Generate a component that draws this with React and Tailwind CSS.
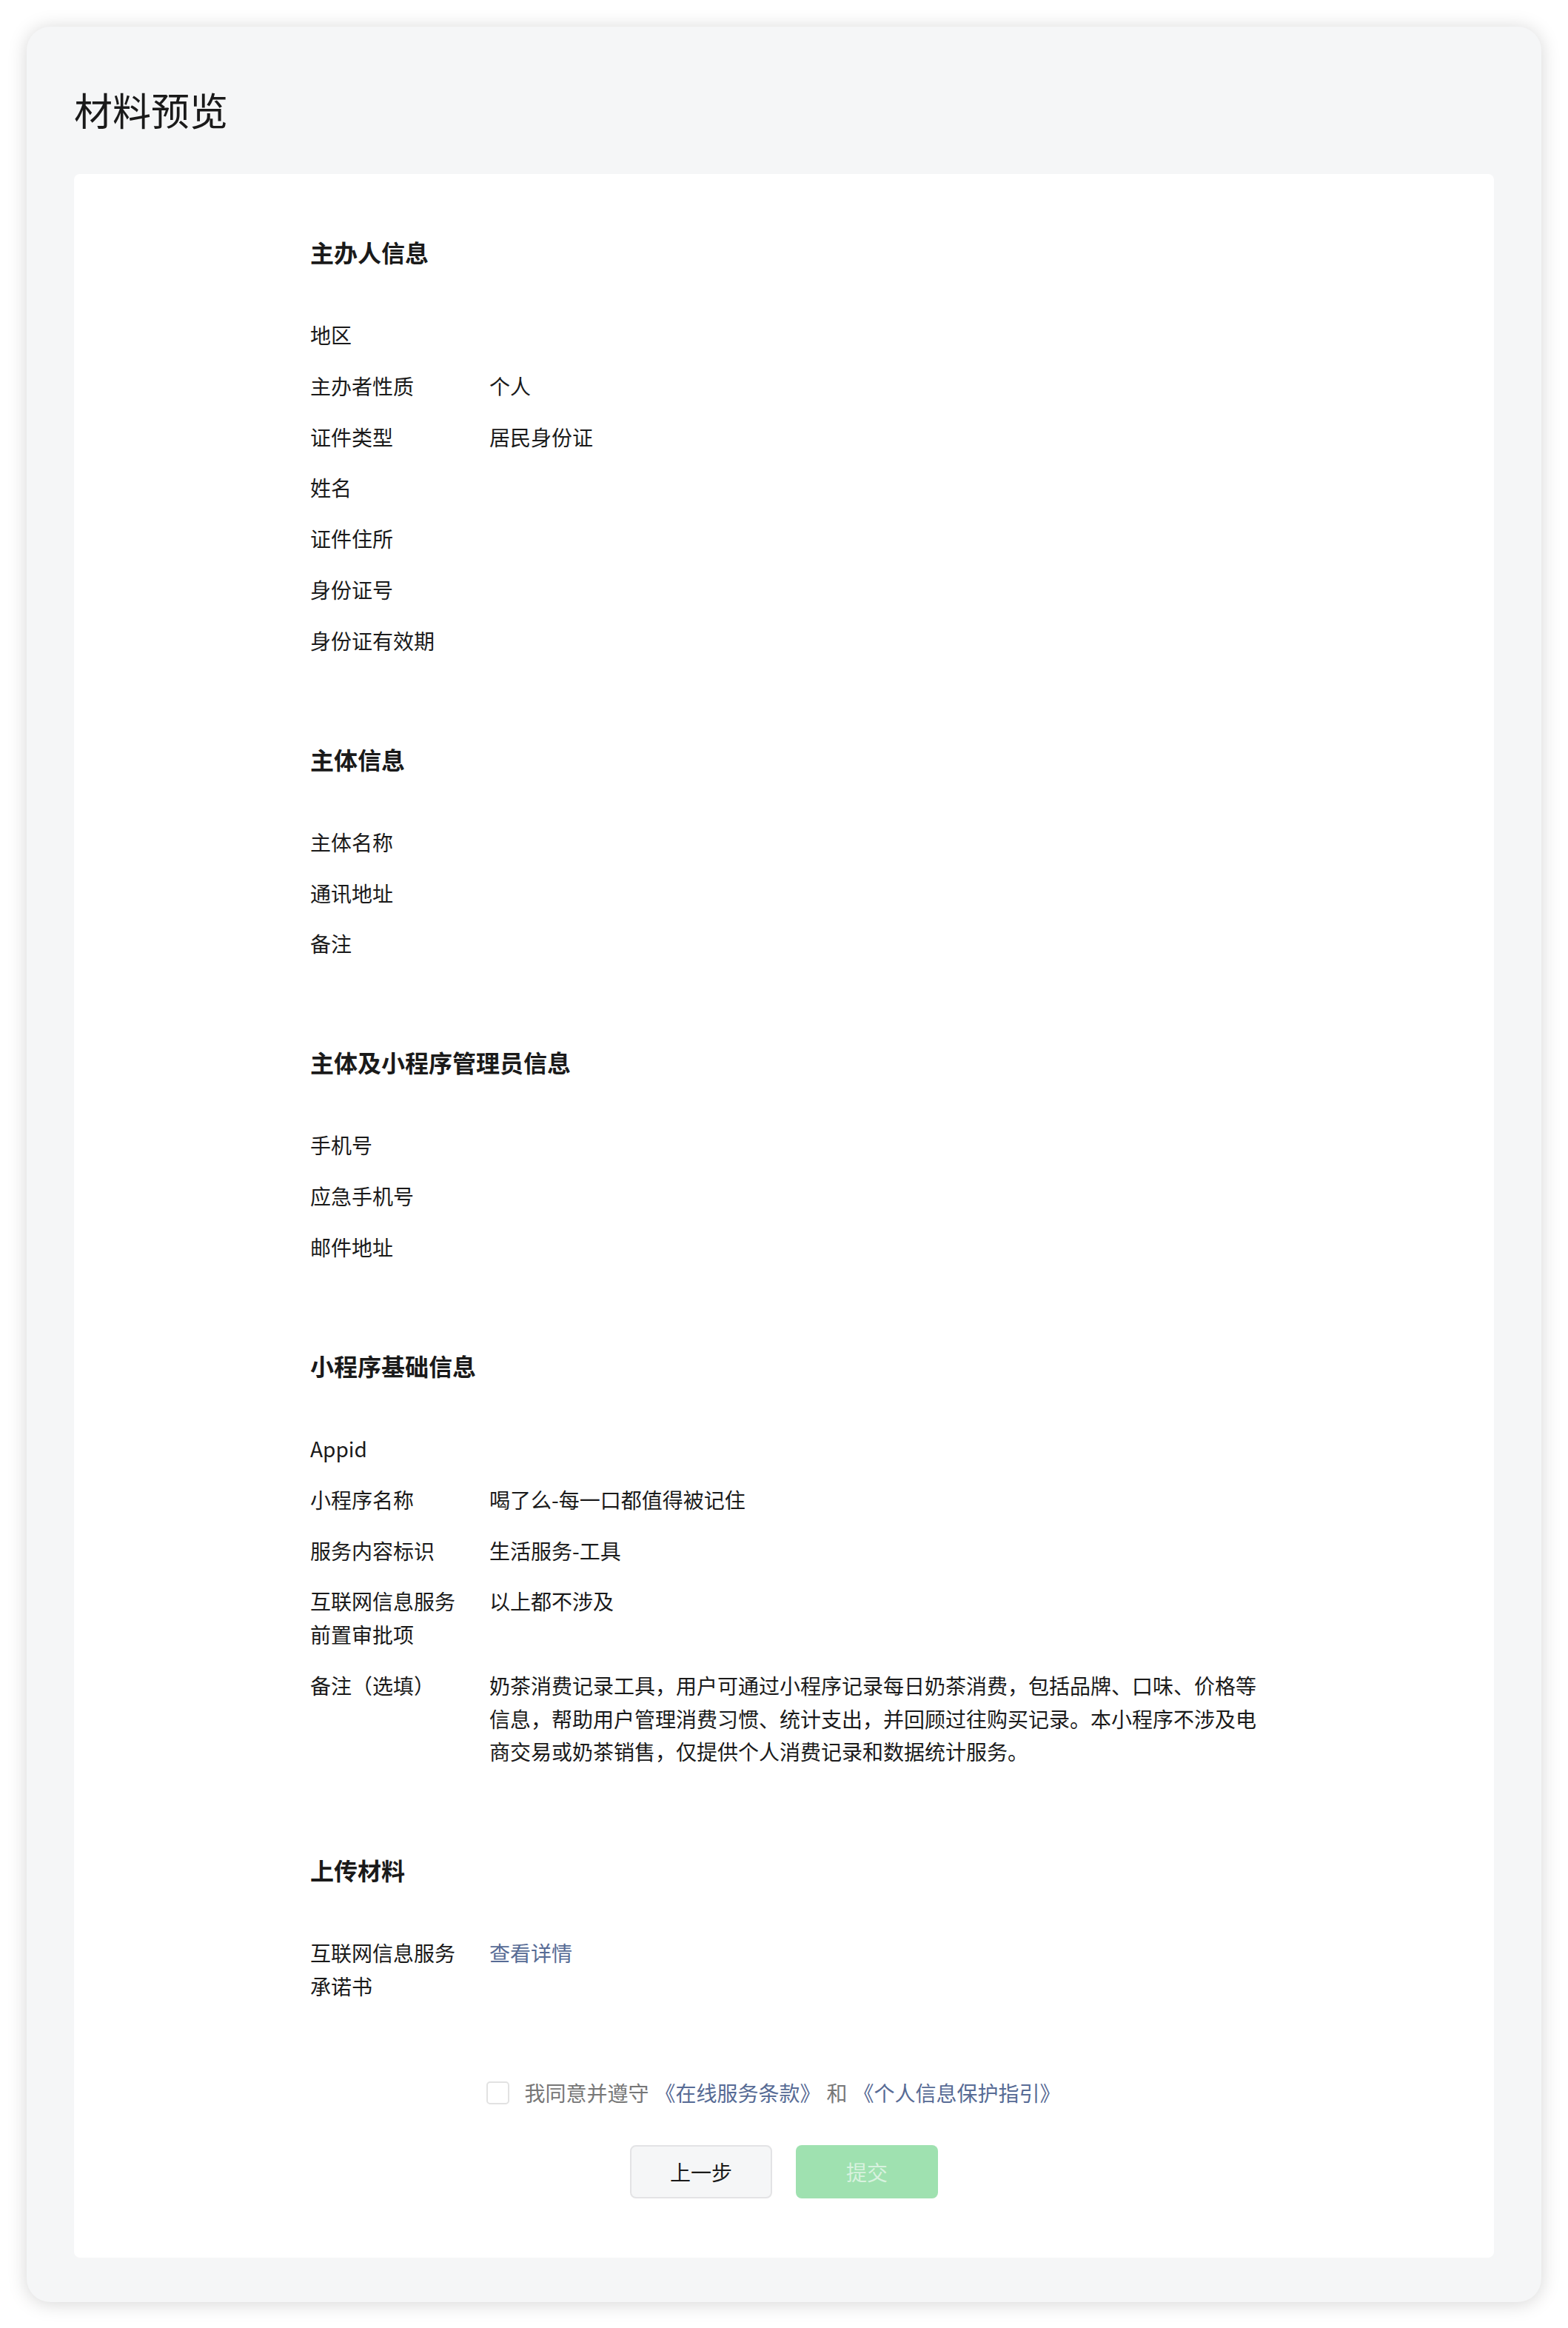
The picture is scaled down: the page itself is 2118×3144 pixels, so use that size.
const FONT = { fontFamily: '"Noto Sans CJK SC", "Noto Sans", sans-serif' };

const sections = [
  {
    title: '主办人信息',
    rows: [
      ['地区', ''],
      ['主办者性质', '个人'],
      ['证件类型', '居民身份证'],
      ['姓名', ''],
      ['证件住所', ''],
      ['身份证号', ''],
      ['身份证有效期', ''],
    ],
  },
  {
    title: '主体信息',
    rows: [
      ['主体名称', ''],
      ['通讯地址', ''],
      ['备注', ''],
    ],
  },
  {
    title: '主体及小程序管理员信息',
    rows: [
      ['手机号', ''],
      ['应急手机号', ''],
      ['邮件地址', ''],
    ],
  },
  {
    title: '小程序基础信息',
    rows: [
      ['Appid', ''],
      ['小程序名称', '喝了么-每一口都值得被记住'],
      ['服务内容标识', '生活服务-工具'],
      ['互联网信息服务前置审批项', '以上都不涉及'],
      [
        '备注（选填）',
        '奶茶消费记录工具，用户可通过小程序记录每日奶茶消费，包括品牌、口味、价格等信息，帮助用户管理消费习惯、统计支出，并回顾过往购买记录。本小程序不涉及电商交易或奶茶销售，仅提供个人消费记录和数据统计服务。',
      ],
    ],
  },
  {
    title: '上传材料',
    rows: [['互联网信息服务承诺书', '查看详情', true]],
  },
];

function Row({ label, value, link }) {
  return (
    <div className="flex text-[28px] leading-[1.6] text-[#1a1a1a]">
      <div className="w-[242px] shrink-0 pr-[32px]">{label}</div>
      <div className={`min-w-0 flex-1 ${link ? 'text-[#576b95]' : ''}`}>{value}</div>
    </div>
  );
}

export default function App() {
  return (
    <div className="min-h-screen bg-white p-[36px]" style={FONT}>
      <div className="rounded-[32px] bg-[#f5f6f7] px-[64px] pb-[60px] pt-[76px] shadow-[0_2px_26px_rgba(0,0,0,0.17)]">
        <h1 className="mb-[50px] text-[52px] font-normal leading-[1.4] text-[#1a1a1a]">材料预览</h1>

        <div className="rounded-[8px] bg-white pb-[80px] pt-[80px]">
          <div className="mx-auto flex w-[1280px] flex-col gap-[112px]">
            {sections.map(section => (
              <div key={section.title}>
                <h2 className="mb-[64px] text-[32px] font-semibold leading-[1.6] text-[#1a1a1a]">{section.title}</h2>
                <div className="flex flex-col gap-[24px]">
                  {section.rows.map(([label, value, link]) => (
                    <Row key={label} label={label} value={value} link={link} />
                  ))}
                </div>
              </div>
            ))}
          </div>

          <div className="mt-[99px] flex items-center justify-center pr-[28px] text-[28px] leading-[1.6] text-[#777]">
            <span className="mr-[20px] inline-block h-[31px] w-[31px] rounded-[5px] border-2 border-[#e2e2e2] bg-white" />
            <span>我同意并遵守</span>
            <span className="ml-[8px] text-[#576b95]">《在线服务条款》</span>
            <span className="ml-[8px]">和</span>
            <span className="ml-[8px] text-[#576b95]">《个人信息保护指引》</span>
          </div>

          <div className="mt-[48px] flex justify-center gap-[32px]">
            <button className="h-[72px] w-[192px] rounded-[8px] border-2 border-[#e3e3e5] bg-[#f5f6f7] text-[28px] text-[#1a1a1a]">
              上一步
            </button>
            <button className="h-[72px] w-[192px] rounded-[8px] bg-[#9fe1b0] text-[28px] text-[#d8f2df]">
              提交
            </button>
          </div>
        </div>
      </div>
    </div>
  );
}
